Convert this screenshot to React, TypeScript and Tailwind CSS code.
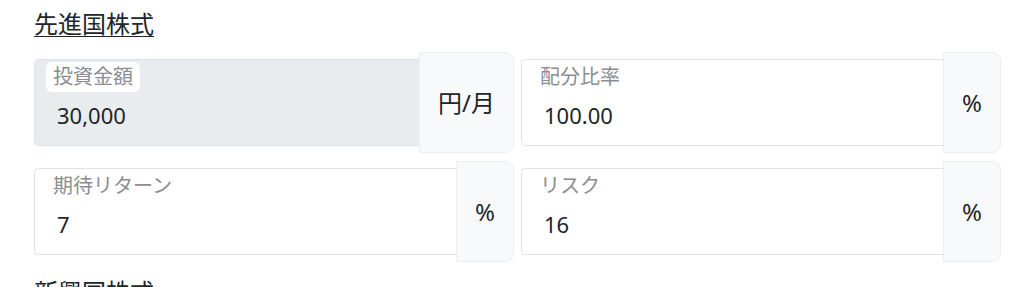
const FONT = '[font-family:"Noto_Sans","Noto_Sans_CJK_JP",sans-serif]'

type Field = {
  label: string
  value: string
  unit: string
  disabled?: boolean
}

const SECTIONS: { title: string; fields: Field[] }[] = [
  {
    title: '先進国株式',
    fields: [
      { label: '投資金額', value: '30,000', unit: '円/月', disabled: true },
      { label: '配分比率', value: '100.00', unit: '%' },
      { label: '期待リターン', value: '7', unit: '%' },
      { label: 'リスク', value: '16', unit: '%' },
    ],
  },
  {
    title: '新興国株式',
    fields: [],
  },
]

function FloatingInput({ label, value, unit, disabled }: Field) {
  return (
    <div className="flex items-center">
      <div
        className={`flex h-[87px] min-w-0 flex-1 flex-col rounded-l-[5px] border border-r-0 border-[#dee2e6] pt-[2px] ${
          disabled ? 'bg-[#e9ecef]' : 'bg-white'
        }`}
      >
        <span className="ml-[11px] self-start rounded-md bg-white px-[7px] text-[20px] leading-[30px] text-[#8a8d91]">
          {label}
        </span>
        <span className="mt-[7px] pl-[22px] text-[22px] leading-[33px] text-[#212529]">{value}</span>
      </div>
      <div className="flex h-[101px] items-center rounded-r-[9px] border border-[#eceef0] bg-[#f8f9fa] px-[18px] text-[24px] text-[#212529]">
        {unit}
      </div>
    </div>
  )
}

export default function App() {
  return (
    <div className={`${FONT} bg-white pr-[23px] pl-[34px] pt-[6px] text-[#212529]`}>
      {SECTIONS.map((s) => (
        <section key={s.title} className="mb-[12px]">
          <h2 className="mb-[10px] text-[24px] leading-[36px] underline underline-offset-[3px] decoration-1">
            {s.title}
          </h2>
          {s.fields.length > 0 && (
            <div className="grid grid-cols-2 gap-x-[7px] gap-y-[8px]">
              {s.fields.map((f) => (
                <FloatingInput key={f.label} {...f} />
              ))}
            </div>
          )}
        </section>
      ))}
    </div>
  )
}
